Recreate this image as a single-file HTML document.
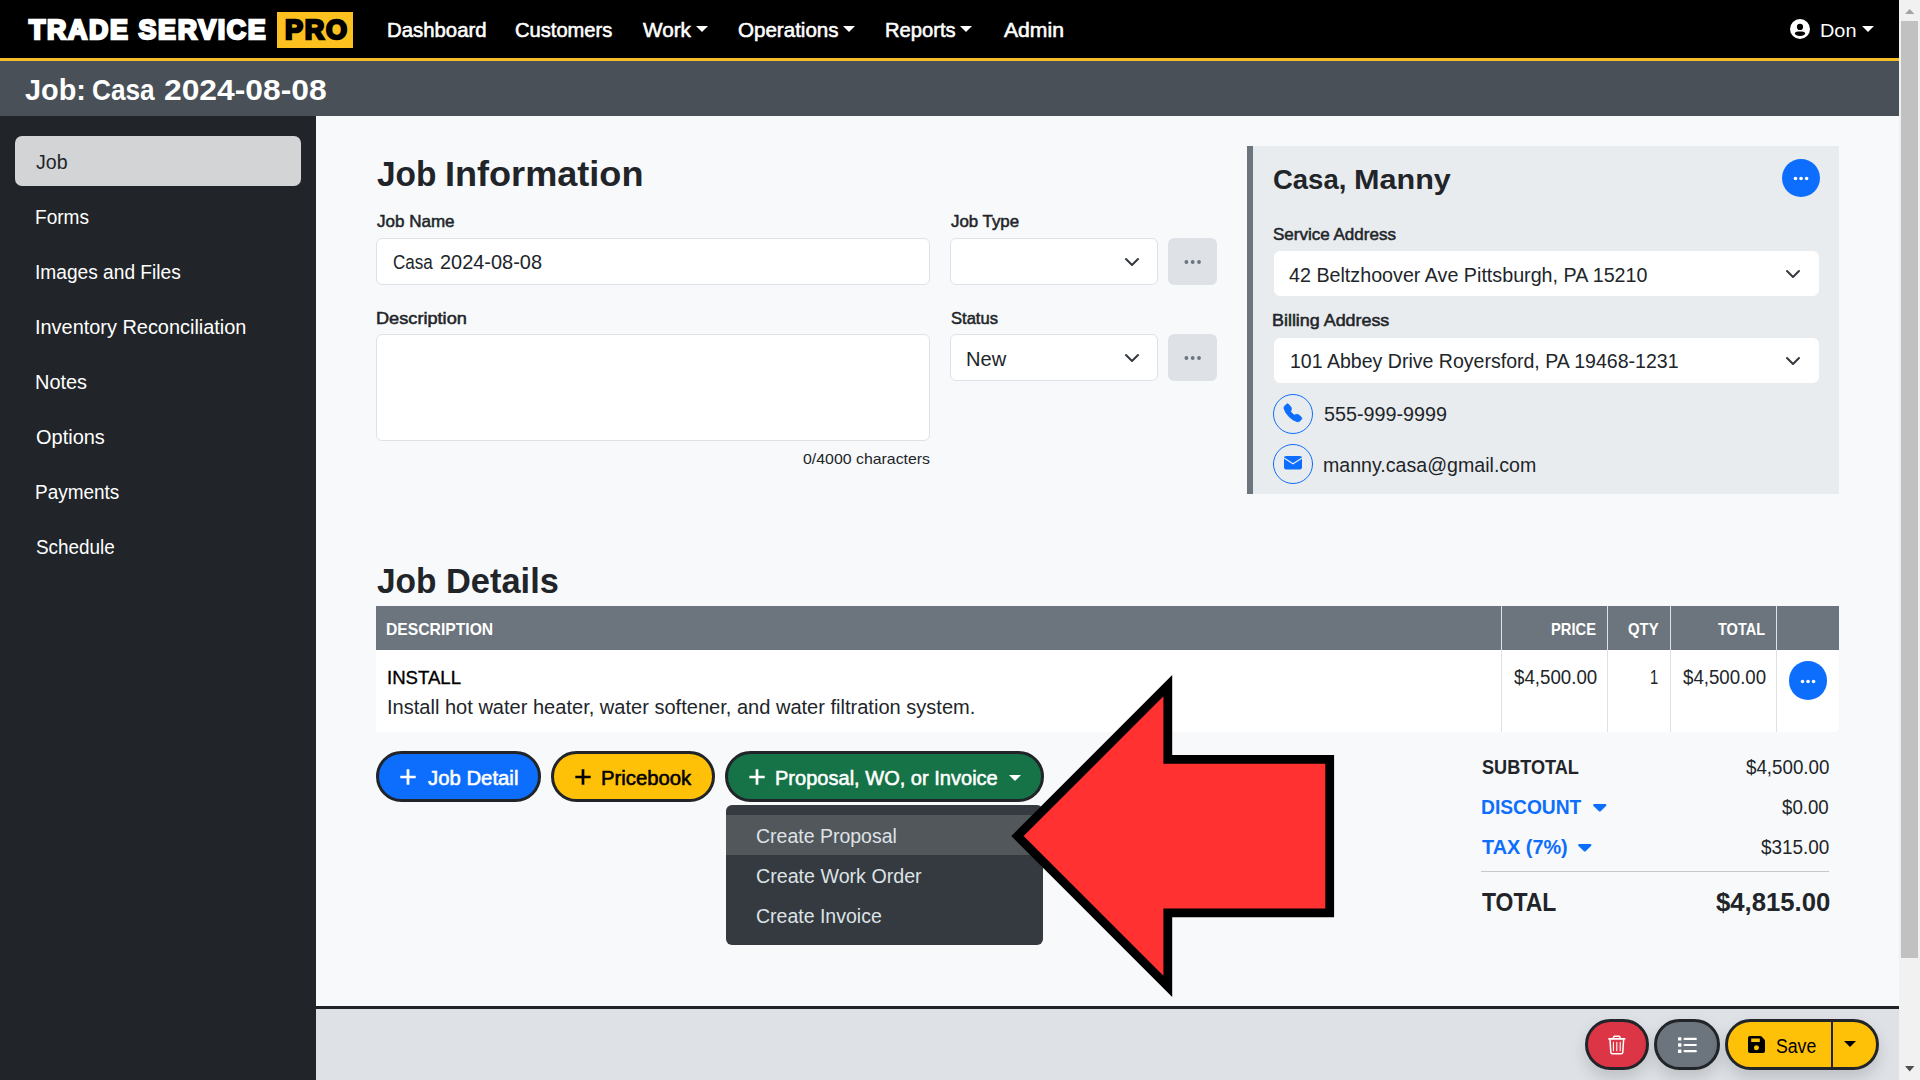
<!DOCTYPE html>
<html lang="en">
<head>
<meta charset="utf-8">
<title>Job: Casa 2024-08-08</title>
<style>
*{box-sizing:border-box;margin:0;padding:0}
html,body{width:1920px;height:1080px;overflow:hidden;background:#f8f9fa;font-family:"Liberation Sans",sans-serif}
.a{position:absolute}
.t{position:absolute;white-space:nowrap;transform-origin:0 0;display:block;margin:0;font-weight:400;font-style:normal;text-decoration:none}
h1,h2,h3{margin:0;font-size:0;line-height:0}
button{font:inherit;padding:0;margin:0;cursor:pointer}
.nav{left:0;top:0;width:1899px;height:58px;background:#000}
.navline{left:0;top:58px;width:1899px;height:3px;background:#f6be25}
.titlebar{left:0;top:61px;width:1899px;height:55px;background:#495057}
.side{left:0;top:116px;width:316px;height:964px;background:#212529}
.side .act{left:15px;top:20px;width:286px;height:50px;border-radius:7px;background:#d3d4d5}
.inp{background:#fff;border:1px solid #dee2e6;border-radius:6px}
.more{background:#dee2e6;border-radius:6px}
.card{left:1247px;top:146px;width:592px;height:348px;background:#e9ecef;border-left:6px solid #6c757d}
.circ{border-radius:50%;background:#0d6efd}
.ring{border-radius:50%;border:1.3px solid #0d6efd}
.caret{width:0;height:0;border-left:6px solid transparent;border-right:6px solid transparent;border-top:6px solid #fff}
.pill{border:3px solid #212529;border-radius:26px;height:51px;top:751px}
.fp{top:1019px!important;box-shadow:0 8px 16px rgba(0,0,0,.15)}
.thead{left:376px;top:606px;width:1463px;height:44px;background:#6c757d}
.trow{left:376px;top:650px;width:1463px;height:82px;background:#fff;border-radius:0 0 5px 0}
.vsep{width:1px;top:606px;height:126px;background:#dee2e6}
.menu{left:725.5px;top:805px;width:317.5px;height:140px;background:#343a40;border-radius:6px}
.menu .hl{left:0;top:10px;width:100%;height:39.5px;background:#52575c}
.footer{left:316px;top:1006px;width:1583px;height:74px;border-top:3px solid #212529;background:#dee2e6}
.sbar{left:1899px;top:0;width:21px;height:1080px;background:#f1f1f1}
.sthumb{left:1901px;top:21px;width:17px;height:937px;background:#c1c1c1}
svg{position:absolute;overflow:visible}
</style>
</head>
<body>
<header>
<nav>
<div class="a nav"></div>
<div class="a navline"></div>
<div class="a" style="left:276.7px;top:11.5px;width:76.3px;height:36px;background:#fcc01f"></div>
<div class="a caret" style="left:695.8px;top:26px"></div>
<div class="a caret" style="left:842.6px;top:26px"></div>
<div class="a caret" style="left:960.3px;top:26px"></div>
<div class="a caret" style="left:1862px;top:26px"></div>
<svg style="left:1790px;top:19px" width="20" height="20" viewBox="0 0 20 20"><circle cx="10" cy="10" r="10" fill="#fff"/><circle cx="10" cy="7.9" r="3.1" fill="#000"/><path d="M4.9 14.6c0-1.5 1.4-2.2 3-2.2h4.2c1.6 0 3 .7 3 2.2 0 1.300-2.300 2.400-5.100 2.400s-5.100-1.100-5.100-2.400z" fill="#000"/></svg>
<b class="t" style="left:28.70px;top:9.80px;font-size:26.8px;line-height:40px;color:#fff;transform:scaleX(0.9969);font-weight:700;-webkit-text-stroke:2.4px #fff;letter-spacing:1.7px;">TRADE SERVICE</b>
<b class="t" style="left:285.19px;top:9.80px;font-size:26.8px;line-height:40px;color:#000;transform:scaleX(1.0079);font-weight:700;-webkit-text-stroke:2.4px #000;letter-spacing:1.7px;">PRO</b>
<a class="t" style="left:386.97px;top:14.90px;font-size:19.8px;line-height:30px;color:#fff;transform:scaleX(1.0287);-webkit-text-stroke:0.55px #fff;">Dashboard</a>
<a class="t" style="left:515.18px;top:14.90px;font-size:19.8px;line-height:30px;color:#fff;transform:scaleX(1.0174);-webkit-text-stroke:0.55px #fff;">Customers</a>
<a class="t" style="left:642.60px;top:14.90px;font-size:19.8px;line-height:30px;color:#fff;transform:scaleX(1.0456);-webkit-text-stroke:0.55px #fff;">Work</a>
<a class="t" style="left:738.00px;top:14.90px;font-size:19.8px;line-height:30px;color:#fff;transform:scaleX(1.0395);-webkit-text-stroke:0.55px #fff;">Operations</a>
<a class="t" style="left:884.98px;top:14.90px;font-size:19.8px;line-height:30px;color:#fff;transform:scaleX(1.0194);-webkit-text-stroke:0.55px #fff;">Reports</a>
<a class="t" style="left:1003.70px;top:14.90px;font-size:19.8px;line-height:30px;color:#fff;transform:scaleX(1.0694);-webkit-text-stroke:0.55px #fff;">Admin</a>
<a class="t" style="left:1820.21px;top:15.90px;font-size:19.2px;line-height:29px;color:#fff;transform:scaleX(1.0363);">Don</a>
</nav>
<div class="a titlebar"></div>
<h1><span class="t" style="left:25.00px;top:67.50px;font-size:29.1px;line-height:44px;color:#fff;transform:scaleX(0.9926);font-weight:700;">Job:</span> <span class="t" style="left:91.80px;top:67.50px;font-size:29.1px;line-height:44px;color:#fff;transform:scaleX(0.9008);font-weight:700;">Casa</span> <span class="t" style="left:163.51px;top:67.50px;font-size:29.1px;line-height:44px;color:#fff;transform:scaleX(1.0931);font-weight:700;">2024-08-08</span></h1>
</header>

<aside>
<div class="a side"><div class="a act"></div></div>
<nav>
<a class="t" style="left:35.60px;top:147.85px;font-size:19.3px;line-height:29px;color:#212529;transform:scaleX(1.0141);">Job</a>
<a class="t" style="left:35.11px;top:202.85px;font-size:19.3px;line-height:29px;color:#fff;transform:scaleX(0.9890);">Forms</a>
<a class="t" style="left:35.11px;top:257.85px;font-size:19.3px;line-height:29px;color:#fff;transform:scaleX(0.9929);">Images and Files</a>
<a class="t" style="left:35.07px;top:312.85px;font-size:19.3px;line-height:29px;color:#fff;transform:scaleX(1.0328);">Inventory Reconciliation</a>
<a class="t" style="left:35.07px;top:367.85px;font-size:19.3px;line-height:29px;color:#fff;transform:scaleX(1.0342);">Notes</a>
<a class="t" style="left:36.10px;top:422.85px;font-size:19.3px;line-height:29px;color:#fff;transform:scaleX(1.0363);">Options</a>
<a class="t" style="left:35.12px;top:477.85px;font-size:19.3px;line-height:29px;color:#fff;transform:scaleX(0.9834);">Payments</a>
<a class="t" style="left:36.10px;top:532.85px;font-size:19.3px;line-height:29px;color:#fff;transform:scaleX(0.9801);">Schedule</a>
</nav>
</aside>

<main>
<section>
<h2><span class="t" style="left:376.75px;top:148.25px;font-size:34.9px;line-height:52px;color:#212529;transform:scaleX(0.9593);font-weight:700;">Job</span> <span class="t" style="left:445.43px;top:148.25px;font-size:34.9px;line-height:52px;color:#212529;transform:scaleX(1.0341);font-weight:700;">Information</span></h2>
<div class="a inp" style="left:376px;top:238px;width:554px;height:47px"></div>
<div class="a inp" style="left:950px;top:238px;width:208px;height:47px"></div>
<div class="a more" style="left:1168px;top:238px;width:49px;height:47px"></div>
<div class="a inp" style="left:376px;top:334px;width:554px;height:107px"></div>
<div class="a inp" style="left:950px;top:334px;width:208px;height:47px"></div>
<div class="a more" style="left:1168px;top:334px;width:49px;height:47px"></div>
<svg style="left:1125px;top:258px" width="14" height="8" viewBox="0 0 14 8"><path d="M1 1l6 6 6-6" fill="none" stroke="#343a40" stroke-width="2" stroke-linecap="round" stroke-linejoin="round"/></svg>
<svg style="left:1125px;top:353.75px" width="14" height="8" viewBox="0 0 14 8"><path d="M1 1l6 6 6-6" fill="none" stroke="#343a40" stroke-width="2" stroke-linecap="round" stroke-linejoin="round"/></svg>
<svg style="left:1184px;top:259px" width="18" height="6" viewBox="0 0 18 6"><circle cx="2.400" cy="3" r="1.900" fill="#6c757d"/><circle cx="8.700" cy="3" r="1.900" fill="#6c757d"/><circle cx="15" cy="3" r="1.900" fill="#6c757d"/></svg>
<svg style="left:1184px;top:355px" width="18" height="6" viewBox="0 0 18 6"><circle cx="2.400" cy="3" r="1.900" fill="#6c757d"/><circle cx="8.700" cy="3" r="1.900" fill="#6c757d"/><circle cx="15" cy="3" r="1.900" fill="#6c757d"/></svg>
<div><span class="t" style="left:393.00px;top:247.75px;font-size:19.3px;line-height:29px;color:#212529;transform:scaleX(0.8832);">Casa</span> <span class="t" style="left:440.00px;top:247.75px;font-size:19.3px;line-height:29px;color:#212529;transform:scaleX(1.0340);">2024-08-08</span></div>
<label class="t" style="left:376.75px;top:210.00px;font-size:15.9px;line-height:24px;color:#212529;transform:scaleX(1.0709);-webkit-text-stroke:0.5px #212529;">Job Name</label>
<label class="t" style="left:950.50px;top:210.00px;font-size:15.9px;line-height:24px;color:#212529;transform:scaleX(1.0604);-webkit-text-stroke:0.5px #212529;">Job Type</label>
<label class="t" style="left:375.61px;top:306.75px;font-size:15.9px;line-height:24px;color:#212529;transform:scaleX(1.1430);-webkit-text-stroke:0.5px #212529;">Description</label>
<label class="t" style="left:950.50px;top:306.75px;font-size:15.9px;line-height:24px;color:#212529;transform:scaleX(1.0417);-webkit-text-stroke:0.5px #212529;">Status</label>
<span class="t" style="left:965.96px;top:344.50px;font-size:19.3px;line-height:29px;color:#212529;transform:scaleX(1.0424);">New</span>
<small class="t" style="left:803.00px;top:448.00px;font-size:15.0px;line-height:22px;color:#212529;transform:scaleX(1.0579);">0/4000 characters</small>
</section>

<section>
<div class="a card"></div>
<div class="a circ" style="left:1781.5px;top:159px;width:38px;height:38px"></div>
<svg style="left:1792.7px;top:176.2px" width="16" height="5" viewBox="0 0 16 5"><circle cx="2.500" cy="2.500" r="1.800" fill="#fff"/><circle cx="8.050" cy="2.500" r="1.800" fill="#fff"/><circle cx="13.600" cy="2.500" r="1.800" fill="#fff"/></svg>
<div class="a inp" style="left:1273.5px;top:251px;width:545px;height:45px;border-color:#fff"></div>
<div class="a inp" style="left:1273.5px;top:338px;width:545px;height:45px;border-color:#fff"></div>
<svg style="left:1785.8px;top:269.8px" width="14" height="8" viewBox="0 0 14 8"><path d="M1 1l6 6 6-6" fill="none" stroke="#343a40" stroke-width="2" stroke-linecap="round" stroke-linejoin="round"/></svg>
<svg style="left:1785.8px;top:356.5px" width="14" height="8" viewBox="0 0 14 8"><path d="M1 1l6 6 6-6" fill="none" stroke="#343a40" stroke-width="2" stroke-linecap="round" stroke-linejoin="round"/></svg>
<div class="a ring" style="left:1272.75px;top:393.75px;width:40.5px;height:40.5px"></div>
<div class="a ring" style="left:1272.75px;top:443.75px;width:40.5px;height:40.5px"></div>
<svg style="left:1283.75px;top:404.25px" width="17.75" height="17.75" viewBox="0 0 16 16"><path fill="#0d6efd" stroke="#0d6efd" stroke-width=".8" stroke-linejoin="round" fill-rule="evenodd" d="M1.885.511a1.745 1.745 0 0 1 2.610.163L6.290 2.980c.329.423.445.974.315 1.494l-.547 2.190a.68.68 0 0 0 .178.643l2.457 2.457a.68.68 0 0 0 .644.178l2.189-.547a1.750 1.750 0 0 1 1.494.315l2.306 1.794c.829.645.905 1.870.163 2.611l-1.034 1.034c-.740.740-1.846 1.065-2.877.702a18.600 18.600 0 0 1-7.010-4.420 18.600 18.600 0 0 1-4.420-7.009c-.362-1.030-.037-2.137.703-2.877z"/></svg>
<svg style="left:1283.75px;top:456.25px" width="18" height="13.500" viewBox="0 0 18 13.500"><rect x="0" y="0" width="18" height="13.500" rx="2.200" fill="#0d6efd"/><path d="M0.300 2.300L9 7.700 17.700 2.300" fill="none" stroke="#e9ecef" stroke-width="1.300"/></svg>
<h3><span class="t" style="left:1272.83px;top:158.30px;font-size:28.4px;line-height:43px;color:#212529;transform:scaleX(0.9674);font-weight:700;">Casa,</span> <span class="t" style="left:1354.42px;top:158.30px;font-size:28.4px;line-height:43px;color:#212529;transform:scaleX(1.0770);font-weight:700;">Manny</span></h3>
<label class="t" style="left:1273.25px;top:223.00px;font-size:15.9px;line-height:24px;color:#212529;transform:scaleX(1.0707);-webkit-text-stroke:0.5px #212529;">Service Address</label>
<span class="t" style="left:1289.25px;top:261.00px;font-size:19.3px;line-height:29px;color:#212529;transform:scaleX(1.0217);">42 Beltzhoover Ave Pittsburgh, PA 15210</span>
<label class="t" style="left:1272.12px;top:309.25px;font-size:15.9px;line-height:24px;color:#212529;transform:scaleX(1.1255);-webkit-text-stroke:0.5px #212529;">Billing Address</label>
<span class="t" style="left:1289.74px;top:347.00px;font-size:19.3px;line-height:29px;color:#212529;transform:scaleX(1.0134);">101 Abbey Drive Royersford, PA 19468-1231</span>
<a class="t" style="left:1323.75px;top:399.25px;font-size:19.9px;line-height:30px;color:#212529;transform:scaleX(0.9934);">555-999-9999</a>
<a class="t" style="left:1322.73px;top:451.00px;font-size:19.3px;line-height:29px;color:#212529;transform:scaleX(1.0161);">manny.casa@gmail.com</a>
</section>

<section>
<h2><span class="t" style="left:376.75px;top:555.25px;font-size:34.9px;line-height:52px;color:#212529;transform:scaleX(0.9593);font-weight:700;">Job</span> <span class="t" style="left:445.53px;top:555.25px;font-size:34.9px;line-height:52px;color:#212529;transform:scaleX(0.9863);font-weight:700;">Details</span></h2>
<div class="a thead"></div>
<div class="a trow"></div>
<div class="a vsep" style="left:1501px"></div>
<div class="a vsep" style="left:1607px"></div>
<div class="a vsep" style="left:1670px"></div>
<div class="a vsep" style="left:1776px"></div>
<div class="a circ" style="left:1788.75px;top:661.2px;width:38.5px;height:38.5px"></div>
<svg style="left:1800px;top:678.5px" width="16" height="5" viewBox="0 0 16 5"><circle cx="2.500" cy="2.500" r="1.800" fill="#fff"/><circle cx="8.050" cy="2.500" r="1.800" fill="#fff"/><circle cx="13.600" cy="2.500" r="1.800" fill="#fff"/></svg>
<b class="t" style="left:386.04px;top:617.00px;font-size:16.3px;line-height:24px;color:#fff;transform:scaleX(0.9633);font-weight:700;">DESCRIPTION</b>
<b class="t" style="left:1551.40px;top:617.00px;font-size:16.3px;line-height:24px;color:#fff;transform:scaleX(0.9038);font-weight:700;">PRICE</b>
<b class="t" style="left:1628.30px;top:617.00px;font-size:16.3px;line-height:24px;color:#fff;transform:scaleX(0.9130);font-weight:700;">QTY</b>
<b class="t" style="left:1718.00px;top:617.00px;font-size:16.3px;line-height:24px;color:#fff;transform:scaleX(0.8936);font-weight:700;">TOTAL</b>
<strong class="t" style="left:387.03px;top:662.75px;font-size:19.2px;line-height:29px;color:#000;transform:scaleX(0.9690);-webkit-text-stroke:0.35px #000;">INSTALL</strong>
<span class="t" style="left:386.86px;top:692.75px;font-size:19.3px;line-height:29px;color:#212529;transform:scaleX(1.0397);">Install hot water heater, water softener, and water filtration system.</span>
<span class="t" style="left:1513.75px;top:661.50px;font-size:19.9px;line-height:30px;color:#212529;transform:scaleX(0.9402);">$4,500.00</span>
<span class="t" style="left:1649.86px;top:661.50px;font-size:19.9px;line-height:30px;color:#212529;transform:scaleX(0.7400);">1</span>
<span class="t" style="left:1682.50px;top:661.50px;font-size:19.9px;line-height:30px;color:#212529;transform:scaleX(0.9396);">$4,500.00</span>
<button type="button" class="a pill" style="left:376px;width:165px;background:#0d6efd"></button>
<svg style="left:399.8px;top:769px" width="16" height="16" viewBox="0 0 16 16"><path d="M8 0.300v15.400M0.300 8h15.400" stroke="#fff" stroke-width="2.700" fill="none"/></svg>
<span class="t" style="left:427.50px;top:762.50px;font-size:19.8px;line-height:30px;color:#fff;transform:scaleX(1.0277);-webkit-text-stroke:0.55px #fff;">Job Detail</span>
<button type="button" class="a pill" style="left:551px;width:164px;background:#ffc107"></button>
<svg style="left:574.9px;top:769px" width="16" height="16" viewBox="0 0 16 16"><path d="M8 0.300v15.400M0.300 8h15.400" stroke="#000" stroke-width="2.700" fill="none"/></svg>
<span class="t" style="left:600.98px;top:762.50px;font-size:19.8px;line-height:30px;color:#000;transform:scaleX(1.0249);-webkit-text-stroke:0.55px #000;">Pricebook</span>
<button type="button" class="a pill" style="left:725px;width:319px;background:#157347"></button>
<svg style="left:748.8px;top:769px" width="16" height="16" viewBox="0 0 16 16"><path d="M8 0.300v15.400M0.300 8h15.400" stroke="#fff" stroke-width="2.700" fill="none"/></svg>
<div class="a caret" style="left:1009.2px;top:774.6px"></div>
<span class="t" style="left:775.24px;top:762.50px;font-size:19.8px;line-height:30px;color:#fff;transform:scaleX(1.0131);-webkit-text-stroke:0.55px #fff;">Proposal, WO, or Invoice</span>
<div class="a menu"><div class="a hl"></div></div>
<nav>
<a class="t" style="left:755.50px;top:822.00px;font-size:19.3px;line-height:29px;color:#dee2e6;transform:scaleX(1.0105);">Create Proposal</a>
<a class="t" style="left:755.50px;top:861.50px;font-size:19.3px;line-height:29px;color:#dee2e6;transform:scaleX(1.0193);">Create Work Order</a>
<a class="t" style="left:755.50px;top:901.50px;font-size:19.3px;line-height:29px;color:#dee2e6;transform:scaleX(1.0113);">Create Invoice</a>
</nav>
<div class="a" style="left:1481px;top:871.2px;width:348px;height:1px;background:#c6c9cc"></div>
<svg style="left:1592.5px;top:804.3px" width="13.600" height="7.600" viewBox="0 0 13.600 7.600"><path d="M1.200 0h11.200a1.100 1.100 0 0 1 .85 1.800l-5.600 5.400a1.200 1.200 0 0 1-1.700 0L.35 1.800A1.100 1.100 0 0 1 1.200 0z" fill="#0d6efd"/></svg>
<svg style="left:1577.5px;top:844.3px" width="13.600" height="7.600" viewBox="0 0 13.600 7.600"><path d="M1.200 0h11.200a1.100 1.100 0 0 1 .85 1.800l-5.600 5.400a1.200 1.200 0 0 1-1.700 0L.35 1.800A1.100 1.100 0 0 1 1.200 0z" fill="#0d6efd"/></svg>
<span class="t" style="left:1481.70px;top:752.30px;font-size:20.3px;line-height:30px;color:#212529;transform:scaleX(0.8931);font-weight:700;">SUBTOTAL</span>
<span class="t" style="left:1745.70px;top:752.30px;font-size:19.9px;line-height:30px;color:#212529;transform:scaleX(0.9419);">$4,500.00</span>
<span class="t" style="left:1480.75px;top:792.30px;font-size:20.3px;line-height:30px;color:#0d6efd;transform:scaleX(0.9476);font-weight:700;">DISCOUNT</span>
<span class="t" style="left:1782.30px;top:792.30px;font-size:19.9px;line-height:30px;color:#212529;transform:scaleX(0.9393);">$0.00</span>
<span class="t" style="left:1481.70px;top:832.30px;font-size:20.3px;line-height:30px;color:#0d6efd;transform:scaleX(0.9797);font-weight:700;">TAX (7%)</span>
<span class="t" style="left:1760.70px;top:832.30px;font-size:19.9px;line-height:30px;color:#212529;transform:scaleX(0.9507);">$315.00</span>
<span class="t" style="left:1481.70px;top:882.70px;font-size:25.2px;line-height:38px;color:#212529;transform:scaleX(0.9109);font-weight:700;">TOTAL</span>
<span class="t" style="left:1715.70px;top:882.70px;font-size:25.2px;line-height:38px;color:#212529;transform:scaleX(1.0202);font-weight:700;">$4,815.00</span>
</section>
</main>

<svg style="left:0;top:0" width="1920" height="1080" viewBox="0 0 1920 1080"><polygon points="1017.5,836 1167.800,685.700 1167.800,759.300 1329.700,759.300 1329.700,912.800 1167.800,912.800 1167.800,986.300" fill="#ff3131" stroke="#000" stroke-width="8.800" stroke-linejoin="miter" stroke-miterlimit="10"/></svg>

<footer>
<div class="a footer"></div>
<button type="button" class="a pill fp" style="left:1585px;width:64px;background:#dc3545"></button>
<button type="button" class="a pill fp" style="left:1654px;width:65.5px;background:#6c757d"></button>
<button type="button" class="a pill fp" style="left:1725px;width:154px;background:#ffc107"></button>
<div class="a" style="left:1830.6px;top:1022px;width:2.6px;height:45px;background:#212529"></div>
<div class="a caret" style="left:1844.3px;top:1041px;border-top-color:#000"></div>
<svg style="left:1608px;top:1035px" width="18" height="20" viewBox="0 0 18 20"><g fill="none" stroke="#fff" stroke-linecap="round" stroke-linejoin="round"><path d="M0.900 3.900H16.700" stroke-width="1.600"/><path d="M4.800 3.700L6.300 1.200H11.300L12.800 3.700" stroke-width="1.400"/><path d="M2 4.600L2.800 17.300a1.600 1.600 0 0 0 1.600 1.500H13.200a1.600 1.600 0 0 0 1.600-1.500L15.600 4.600" stroke-width="1.500"/><path d="M5.400 7.200V15.800M8.800 7.200V15.800M12.200 7.200V15.800" stroke-width="1.100"/></g></svg>
<svg style="left:1677.8px;top:1037px" width="19" height="16" viewBox="0 0 19 16"><g fill="#fff"><rect x="0" y="0.200" width="3.400" height="3.400" rx=".5"/><rect x="0" y="6.300" width="3.400" height="3.400" rx=".5"/><rect x="0" y="12.500" width="3.400" height="3.400" rx=".5"/><rect x="5.500" y=".800" width="13.400" height="2.200" rx="1.100"/><rect x="5.500" y="6.900" width="13.400" height="2.200" rx="1.100"/><rect x="5.500" y="13.100" width="13.400" height="2.200" rx="1.100"/></g></svg>
<svg style="left:1748.3px;top:1036.4px" width="17" height="17" viewBox="0 0 17 17"><path fill="#000" fill-rule="evenodd" d="M2 0h10.200a2 2 0 0 1 1.400.6l2.800 2.800a2 2 0 0 1 .6 1.400V15a2 2 0 0 1-2 2H2a2 2 0 0 1-2-2V2a2 2 0 0 1 2-2zm1.200 2.400v3.700h8.600V2.400zM8.500 9.200a2.500 2.500 0 1 0 0 5 2.500 2.500 0 0 0 0-5z"/></svg>
<span class="t" style="left:1775.60px;top:1031.60px;font-size:19.3px;line-height:29px;color:#000;transform:scaleX(0.9160);">Save</span>
</footer>

<div class="a sbar"></div>
<div class="a sthumb"></div>
<svg style="left:1905px;top:9px" width="9.400" height="5" viewBox="0 0 9.400 5"><path d="M0 5L4.700 0 9.400 5z" fill="#a3a3a3"/></svg>
<svg style="left:1904.8px;top:1065.8px" width="9.400" height="5.400" viewBox="0 0 9.400 5.400"><path d="M0 0h9.400L4.700 5.400z" fill="#505050"/></svg>
</body>
</html>
